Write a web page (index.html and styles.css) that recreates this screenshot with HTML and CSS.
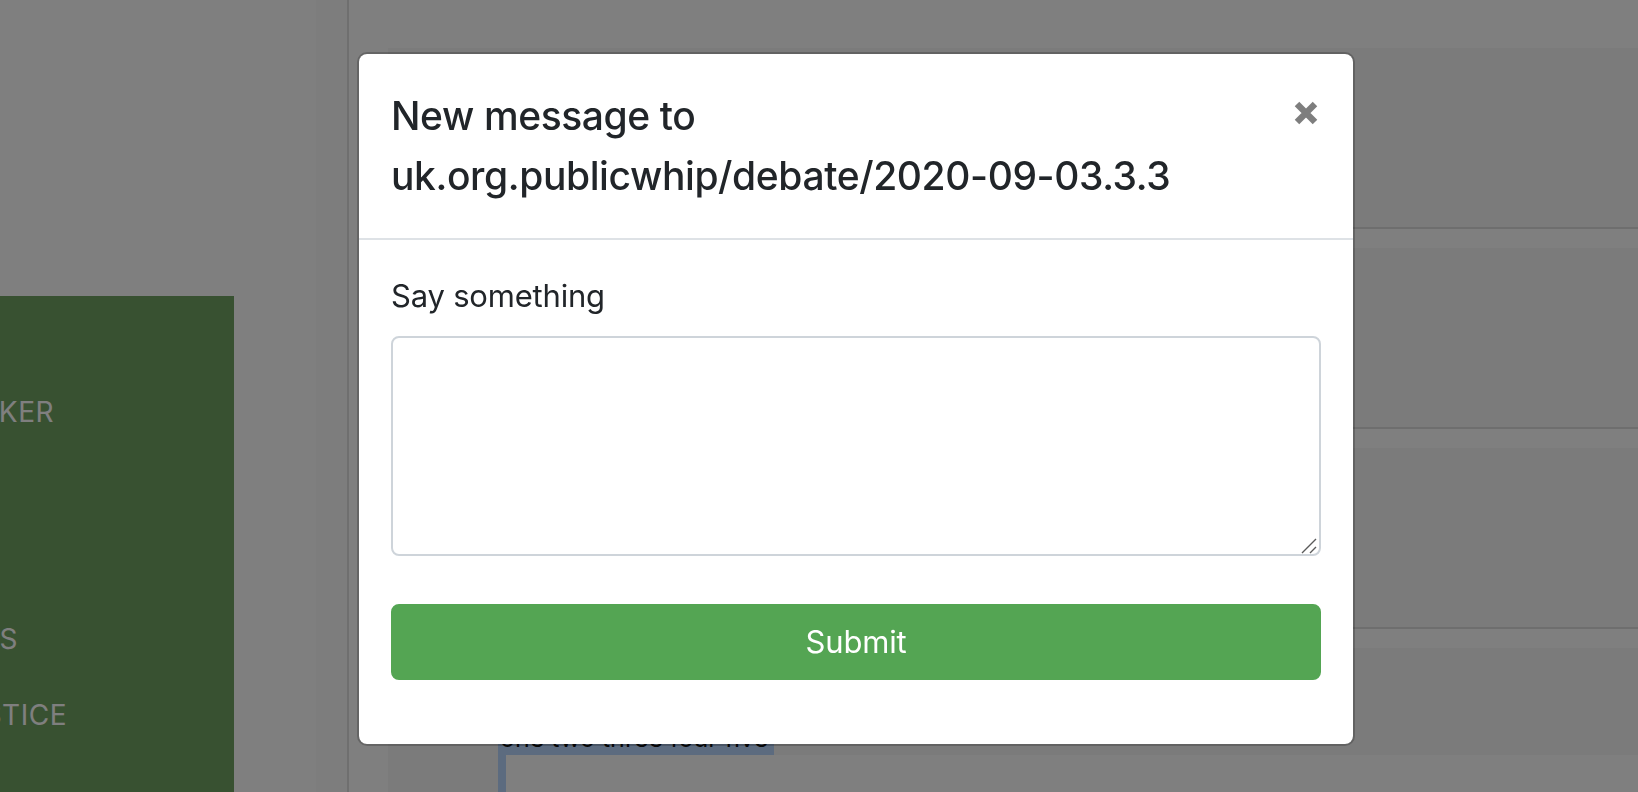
FILE: index.html
```html
<!DOCTYPE html>
<html lang="en">
<head>
<meta charset="utf-8">
<title>New message</title>
<link rel="stylesheet" href="styles.css">
</head>
<body>
<div class="layout">
  <aside class="sidebar">
    <nav class="sidenav">
      <a class="sidenav-link sidenav-link--speaker">SPEAKER</a>
      <a class="sidenav-link sidenav-link--members">MEMBERS</a>
      <a class="sidenav-link sidenav-link--justice">JUSTICE</a>
    </nav>
  </aside>
  <div class="rail"></div>
  <main class="content">
    <section class="card"></section>
    <section class="card"></section>
    <section class="card"></section>
    <section class="card card--last">
      <div class="quote">
        <div class="quote-head">one two three four five</div>
        <div class="quote-body"></div>
      </div>
    </section>
  </main>
</div>

<div class="backdrop"></div>

<div class="modal">
  <div class="modal-header">
    <h5 class="modal-title">New message to uk.org.publicwhip/debate/2020-09-03.3.3</h5>
    <button class="close" type="button" aria-label="Close">
      <svg width="24" height="24" viewBox="0 0 24 24" aria-hidden="true"><path d="M3 3 L21 21 M21 3 L3 21" stroke="#000" stroke-width="6.4" fill="none"/></svg>
    </button>
  </div>
  <div class="modal-body">
    <form class="message-form">
      <div class="form-group">
        <label class="form-label" for="msg">Say something</label>
        <div class="field">
          <textarea class="form-control" id="msg"></textarea>
          <svg class="resize-grip" width="16" height="16" viewBox="0 0 16 16" aria-hidden="true"><path d="M1 15 L15 1 M9 15 L15 9" stroke="#5a5a5a" stroke-width="1.4" fill="none"/></svg>
        </div>
      </div>
      <button class="btn-submit" type="button">Submit</button>
    </form>
  </div>
</div>
</body>
</html>
```

FILE: styles.css
```css
* { box-sizing: border-box; }

html, body {
  margin: 0;
  height: 100%;
}

body {
  background: #ffffff;
  font-family: Inter, "Noto Sans", "Liberation Sans", sans-serif;
  color: #212529;
  overflow: hidden;
}

.layout {
  display: flex;
  height: 792px;
  overflow: hidden;
}

.sidebar {
  width: 234px;
  flex: none;
  padding-top: 296px;
  overflow: hidden;
}

.sidenav {
  background: #70a262;
  height: 100%;
  padding-top: 78px;
  display: flex;
  flex-direction: column;
  margin-left: -200px;
  width: 434px;
}

.sidenav-link {
  display: block;
  text-align: right;
  font-size: 28px;
  line-height: 76px;
  color: #ffffff;
  white-space: nowrap;
  letter-spacing: 0.5px;
}

.sidenav-link--speaker { width: 254px; }
.sidenav-link--members { width: 218px; margin-top: 151px; }
.sidenav-link--justice { width: 267px; }

.rail {
  flex: none;
  width: 33px;
  margin-left: 82px;
  background: #fafafa;
  border-right: 2px solid #dedede;
}

.content {
  flex: 1;
  padding: 48px 0 0 39px;
  display: flex;
  flex-direction: column;
  gap: 19px;
}

.card {
  flex: none;
  height: 181px;
  background: #f6f6f6;
  border-bottom: 2px solid #dcdcdc;
}

.card--last {
  flex: 1;
  min-height: 0;
  border-bottom: 0;
  padding: 73px 0 0 110px;
  display: flex;
  flex-direction: column;
}

.quote {
  flex: 1;
  display: flex;
  flex-direction: column;
  align-items: flex-start;
}

.quote-head {
  background: #b8d6ff;
  height: 34px;
  line-height: 34px;
  font-size: 25px;
  padding: 0 6px 0 2px;
  color: #111;
  white-space: nowrap;
}

.quote-body {
  flex: 1;
  align-self: stretch;
  background: #ffffff;
  border-left: 8px solid #b8d6ff;
}

.backdrop {
  position: fixed;
  inset: 0;
  background: rgba(0, 0, 0, 0.5);
}

.modal {
  position: absolute;
  left: 357px;
  top: 52px;
  width: 998px;
  background: #ffffff;
  background-clip: padding-box;
  border: 2px solid rgba(0, 0, 0, 0.2);
  border-radius: 10px;
}

.modal-header {
  display: flex;
  align-items: flex-start;
  justify-content: space-between;
  padding: 32px;
  border-bottom: 2px solid #dee2e6;
}

.modal-title {
  margin: 0;
  font-size: 39px;
  letter-spacing: -0.4px;
  line-height: 60px;
  font-weight: 500;
  color: #212529;
  max-width: 880px;
}

.close {
  background: transparent;
  border: 0;
  padding: 32px;
  margin: -32px -32px -32px auto;
  opacity: 0.5;
  cursor: pointer;
}

.close svg {
  display: block;
  margin: 15px 3px 0 0;
}

.modal-body {
  padding: 32px;
}

.message-form {
  margin-bottom: 32px;
}

.form-group {
  margin-bottom: 48px;
}

.form-label {
  display: block;
  font-size: 31px;
  letter-spacing: -0.2px;
  line-height: 48px;
  margin-bottom: 16px;
  color: #212529;
}

.field {
  position: relative;
}

.form-control {
  display: block;
  width: 100%;
  height: 220px;
  padding: 12px 24px;
  font-family: inherit;
  font-size: 31px;
  color: #495057;
  background: #ffffff;
  border: 2px solid #ced4da;
  border-radius: 8px;
  resize: none;
}

.resize-grip {
  position: absolute;
  right: 4px;
  bottom: 2px;
  pointer-events: none;
}

.btn-submit {
  display: block;
  width: 100%;
  height: 76px;
  font-family: inherit;
  font-size: 31px;
  letter-spacing: -0.2px;
  line-height: 48px;
  color: #ffffff;
  background: #54a553;
  border: 2px solid #54a553;
  border-radius: 8px;
}
```
